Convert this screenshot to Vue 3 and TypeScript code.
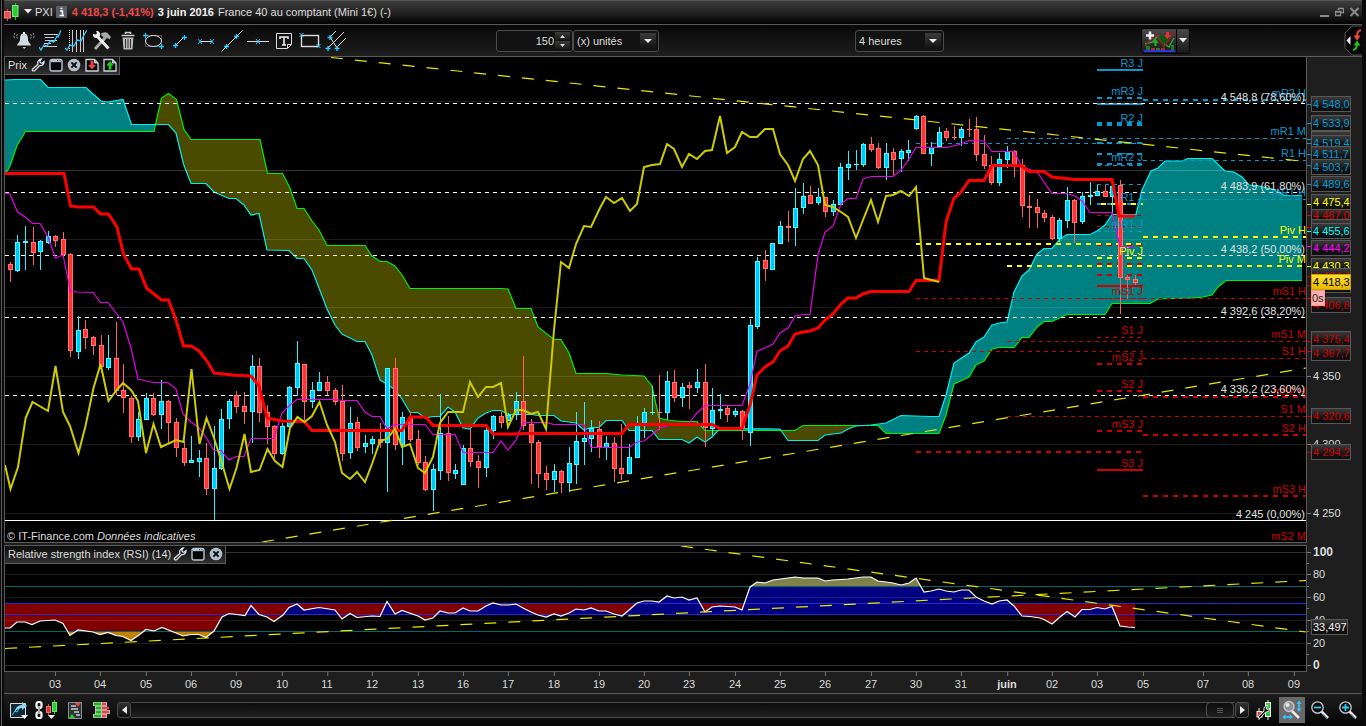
<script setup lang="ts">
import { ref } from 'vue'

type Pt = [number, number]
interface Level { x1: number; x2: number; y: number; c: string; w: number; d: string }
interface Tag { p: string; y: number; c: string; tick?: number }

const units = ref(150)
const unitKind = ref('(x) unités')
const period = ref('4 heures')

/* Plot space of the two panels */
const L = 5, W = 1301
const P_TOP = 57, P_H = 485
const R_TOP = 546, R_H = 125
const pTop = (y: number) => ({ top: ((y - P_TOP) / P_H) * 100 + '%' })
const rTop = (y: number) => ({ top: ((y - R_TOP) / R_H) * 100 + '%' })
const xPos = (x: number) => ({ left: ((x - L) / W) * 100 + '%' })
const endAt = (x: number) => ({ right: ((L + W - x) / W) * 100 + '%' })

/* direction, high, body top, body bottom, low */
const raw = `d262,264,270,282 u235,242,271,272 u226,241,243,270 d227,242,253,265 u240,241,252,270 u231,236,243,244 d235,236,241,247 d232,239,255,258 d253,254,351,357 u316,330,352,359
d320,329,338,349 d336,337,346,355 d335,345,367,373 u335,358,368,370 d322,358,391,395 d364,390,398,413 d396,398,437,443 u412,419,437,441 u393,398,420,420 d393,398,415,416
u380,401,415,429 d400,401,423,444 d418,422,448,457 d441,448,463,466 u436,460,463,463 u450,458,462,477 d443,458,489,495 u426,468,489,520 u409,419,469,470 u399,401,419,429
d391,395,407,413 d392,406,412,424 u355,366,412,443 d358,366,413,422 d405,412,427,444 d425,426,454,458 u423,426,454,455 u386,387,427,427 u341,363,388,396 d364,364,402,420
u382,390,402,408 u372,382,391,391 d376,382,391,395 d388,390,402,405 d385,401,454,461 u407,423,453,459 d417,422,448,451 u435,443,447,453 u436,439,444,454 d423,439,443,448
u368,368,443,492 d358,368,445,450 u412,417,445,465 d412,417,440,442 d430,439,463,465 d456,462,490,491 u464,469,490,511 u394,433,471,480 d416,433,473,481 u464,470,474,479
u445,448,485,485 d429,448,462,467 d455,461,468,488 u427,430,468,477 u415,416,431,439 d412,416,423,428 u413,415,421,421 u392,401,415,420 d356,401,426,430 d419,424,443,484
d440,442,474,488 d466,473,480,490 u464,471,480,492 d470,471,483,493 u447,463,483,492 u412,441,465,484 u402,438,442,465 u420,428,439,452 d421,429,447,458 u436,443,448,460
d437,443,469,482 d424,468,474,480 u444,457,474,474 u416,424,458,458 u408,412,424,438 u386,412,413,415 d375,412,413,430 u371,381,413,420 d370,382,398,402 u383,387,398,407
d382,385,388,409 u369,382,388,393 d364,382,428,447 u388,410,429,435 u394,409,411,419 d406,408,415,422 u408,411,415,417 d410,411,428,440 u319,325,433,446 u257,261,327,329
d250,260,269,281 u243,243,270,270 u221,226,244,244 d211,226,228,242 u188,208,228,246 u183,196,208,214 d186,195,204,204 u188,197,203,205 d197,197,212,217 u200,204,212,216
u163,167,205,205 u151,164,168,180 u150,164,165,170 u143,144,165,167 d137,144,150,152 d143,148,168,169 u143,153,168,180 d148,152,160,175 u149,151,159,172 u140,150,153,161
u115,116,129,130 d115,116,154,154 u142,147,154,166 u127,132,147,147 d128,131,138,141 d126,137,138,140 u127,129,138,146 d119,129,130,137 d117,129,155,161 d135,154,166,169
d156,165,183,185 u153,159,183,186 u146,151,160,168 d150,151,166,177 d159,165,206,217 d195,206,208,228 d199,207,213,228 d210,213,218,222 d215,217,239,240 u218,220,239,242
u187,200,221,228 d199,200,223,243 u192,196,222,224 u182,195,197,205 u185,191,196,196 d185,191,197,197 u186,186,197,215 d180,185,278,314 d275,277,280,299 d275,279,283,285`
const candles = raw.split(/\s+/).map((s, i) => {
  const [h, t, b, l] = s.slice(1).split(',').map(Number)
  return { x: Math.floor(10.4 + i * 7.55), up: s[0] === 'u', h, t, b, l }
})

const chikou = '5,465 10.5,489 18,467 25.6,418 32.5,402 48,411 55.5,366 63,412 70,426 78.5,453 85.5,426 93.5,388 100.6,364 108.5,401 116,391 123,383 131,390 138,401 146,453 153.5,424 161,447 176,440 183.5,442 191.5,369 199.5,444 206.5,418 214,438 221,460 229.5,489 236.5,468 244.5,434 251,472 259.5,470 267.5,449 275,461 282.5,467 290,428 297.5,417 304.5,422 312,416 319.5,402 327,425 335,442 342,473 350,479 357,472 365,482 372,464 380,441 387,439 395,429 402,447 410,444 418,468 425,473 433,457 440,423 448,412 463,412 470,382 478,397 486,387 493,387 501,383 508,427 516,410 523,410 531,414 538,412 546,429 554,330 561,262 569,268 576,244 584,226 591,227 600,208 606,197 614,203 622,198 630,211 637,204 644,167 652,165 660,164 667,144 674,149 682,167 689,154 697,159 705,151 712,150 720,116 727,153 735,147 742,132 750,137 757,137 765,129 773,129 780,154 788,165 795,181 803,159 810,151 818,165 825,205 833,207 841,212 848,217 856,238 863,220 871,200 878,222 886,196 893,195 901,191 909,196 916,187 924,278 939,282'
const kijun = '5,173.5 64,173.5 70.5,206 78,207 93.5,207 100.5,214 108.5,214 117,227 123.5,254 131.5,269 139,269 146.5,288 161.5,300 168.5,300 176,320 183.5,346 191,346 199,351 207,361 214,373 233,375 251,376 259,386 267,418 282,421 304,421.5 312,430.5 402,430.5 410,417 426,417 433,425.5 486,425.5 493,434 513,434 523,433.5 622,433.5 629,424.5 712,424.5 720,428.5 742,428.5 750,405 757,375 765,367 773,362 780,351 788,346 795,334 803,332 810,331 818,328 825,320 833,314 841,304 848,298 856,298 863,294 871,291.5 909,291.5 916,280.5 939,280.5 946,222 954,198 961,192 969,180.5 984,180.5 992,165.5 1014,165.5 1022,166 1029,171.5 1044,171.5 1052,177 1075,179.5 1112,179.5 1119,216 1135,216'
const tenkan = '5,193 10,194 17.5,212 25,217 32.5,223.5 40,223.5 48,237 55.5,258 63,255 70.5,291.5 78,292 93,292.5 100.5,302.5 108,302.5 123,322 131,348 138,379 153,382.5 168,382.5 176,389 183,414 191,422 199,428 207,439 214,450.5 221,450.5 229,460 236,456.5 244,456.5 251,438.5 274,438.5 282,413 289,406 297,399.5 335,399.5 342,400.5 357,400.5 365,412 372,416.5 380,416.5 387,429 395,424.5 425,424.5 433,434.5 455,434.5 463,452.5 493,452.5 501,441 508,450 516,440 523,422.5 546,422.5 554,424.5 584,424.5 591,447.5 629,447.5 637,442 644,441 660,428 667,426 689,423 697,413 705,405.5 742,405.5 750,384 757,351 765,348 773,344 780,333 788,328 795,316 803,314.5 810,314.5 818,255 825,232 833,226 841,204 848,198.5 856,198.5 863,179 871,176.5 893,176.5 901,170 909,159 916,147.5 947,147.5 961,144 969,140.5 984,141 992,151.5 1014,151.5 1022,167 1037,172 1052,193.5 1067,193.5 1075,196 1082,201 1090,212.5 1112,212.5 1120,246.5 1135,246.5'
const spanA = '5,80 16,79.5 40.5,79.5 48,87.5 86,87.5 93,94 101,101 108,102 116,100.5 123,99.5 131.5,124.5 168.5,124.5 176,133 183.5,164 191,183.5 206,183.5 214,192 229,198.5 236,198.5 244,205 251,215 259,213.5 267,250 289,250.5 297,258.5 304,258.5 312,270 319,288 327,309 335,325 342,334 357,341.5 365,341.5 372,355 380,380 387,384 395,390 402,399 410,412.5 418,412.5 425,418 433,416.5 440,416.5 448,407 455,412 463,428 470,429 478,418 486,413 493,410.5 501,410.5 508,414.5 531,414.5 538,415.5 554,415.5 561,421 576,423 584,430 591,427.5 599,427.5 606,420.5 622,420.5 629,430.5 652,430.5 659,439.5 682,439.5 689,443 697,437 705,442 712,437 720,428.5 780,429 788,440.5 818,440.5 825,435 841,433 848,429 856,426 871,425 886,423 901,415.5 930,416.5 939,416.5 946,395 954,363 969,353 976,342 984,337 992,325 999,323 1007,322 1014,292 1022,276 1029,270 1037,254 1044,248.5 1052,248.5 1060,239 1067,234.5 1090,234.5 1097,231 1105,225 1112,214.5 1136,214.5 1142,190 1151,171 1158,168 1165,161 1182,161 1188,158.5 1212,158.5 1225,171 1234,172 1242,177 1249,185 1257,185.5 1272,189 1285,195.5 1302,195.5'
const spanB = '5,175 10,166 17,145.5 25.5,131.5 154,131.5 161.5,98 168.5,93.5 176.5,99.5 184,129.5 191,139.5 260,139.5 267.5,173.5 282.5,173.5 289.5,187 297,208.5 304,208.5 312,221 319,230 327,245.5 365,245.5 372,256 380,261.5 387,261.5 395,266 402,275 410,288.5 501,288.5 508,289 516,308.5 531,308.5 538,327 554,339.5 561,339.5 569,353 576,373.5 606,373.5 622,375 644,376 652,386 659,418 667,420 682,421.5 697,421.5 705,430.5 795,430.5 803,425.5 878,425.5 886,433.5 939,433.5 946,415 954,384 969,377 976,365 984,361 992,349 999,347.5 1014,347.5 1022,337.5 1029,337.5 1037,327 1044,321.5 1052,321.5 1067,314.5 1105,314.5 1112,303.5 1150,303.5 1158,299 1193,298 1203,297 1212,295 1218,287 1226,280.5 1302,280.5'

const parse = (s: string): Pt[] => s.split(' ').map(p => p.split(',').map(Number) as Pt)
const at = (pts: Pt[], x: number): number => {
  for (let i = 1; i < pts.length; i++) {
    if (x <= pts[i][0]) {
      const [x0, y0] = pts[i - 1], [x1, y1] = pts[i]
      return y0 + ((y1 - y0) * (x - x0)) / (x1 - x0)
    }
  }
  return pts[pts.length - 1][1]
}

/* The cloud changes colour wherever its two edges cross */
const clouds = (() => {
  const a = parse(spanA), b = parse(spanB)
  const xs = [...new Set([...a, ...b].map(p => p[0]))].sort((m, n) => m - n)
  const out: { d: string; bull: boolean }[] = []
  let top: Pt[] = [], bot: Pt[] = []
  let bull = at(a, xs[0]) < at(b, xs[0])
  const flush = () => {
    out.push({ bull, d: 'M' + [...top, ...bot.slice().reverse()].map(p => p.join(',')).join('L') + 'Z' })
  }
  let prev: [number, number, number] | null = null
  for (const x of xs) {
    const ya = at(a, x), yb = at(b, x)
    if (prev && ya !== yb && (ya < yb) !== bull) {
      const d0 = prev[1] - prev[2], d1 = ya - yb
      const t = d0 === d1 ? 0 : d0 / (d0 - d1)
      const c: Pt = [prev[0] + (x - prev[0]) * t, prev[1] + (ya - prev[1]) * t]
      top.push(c); bot.push(c)
      flush()
      top = [c]; bot = [c]
      bull = !bull
    }
    top.push([x, ya]); bot.push([x, yb])
    prev = [x, ya, yb]
  }
  flush()
  return out
})()

const B = '#0898d0', R = '#cc0000', Y = '#ffff00'
const lv = (x1: number, x2: number, c: string, list: [number, number, string?][]): Level[] =>
  list.map(([y, w, solid]) => ({ x1, x2, c, y, w, d: solid ? 'none' : w === 1 ? '4 4' : '5 5' }))
const levels: Level[] = [
  ...lv(1097, 1143, B, [[70, 2, 's'], [98, 2], [104, 2, 's'], [124, 4], [143, 2], [154, 2], [164, 2], [165.5, 1], [184.5, 1], [204, 2], [231.5, 1]]),
  ...lv(1101, 1143, Y, [[204, 2]]),
  ...lv(1097, 1143, R, [[215.5, 1], [226.5, 1], [245, 2], [264, 2], [275, 2], [286, 2, 's'], [298.5, 1], [337.5, 1], [364, 2], [391, 2], [431, 2], [470, 2, 's']]),
  ...lv(1097, 1143, Y, [[258, 2]]),
  ...lv(1143, 1306, B, [[100, 2], [160.5, 1], [199.5, 1]]),
  ...lv(1143, 1306, Y, [[237, 2]]),
  ...lv(1143, 1306, R, [[298.5, 1], [358.5, 1], [397, 2], [435, 2], [496, 2]]),
  ...lv(916, 1143, B, [[143.5, 1]]),
  ...lv(916, 1143, Y, [[244, 2]]),
  ...lv(916, 1143, R, [[298.5, 1], [351.5, 1], [452, 2]]),
  ...lv(1007, 1306, B, [[138.5, 1]]),
  ...lv(1007, 1306, Y, [[266, 2]]),
  ...lv(1007, 1306, R, [[341.5, 1], [416.5, 1]]),
]

const lab = (x: number, c: string, list: [string, number][]) => list.map(([t, y]) => ({ x, c, t, y }))
const levelLabels = [
  ...lab(1143, B, [['R3 J', 63], ['mR3 J', 91], ['R2 J', 118], ['mR2 J', 157], ['R1 J', 197], ['mR1 J', 224]]),
  ...lab(1143, Y, [['Piv J', 251]]),
  ...lab(1143, R, [['mS1 J', 291], ['S1 J', 330], ['mS2 J', 357], ['S2 J', 384], ['mS3 J', 424], ['S3 J', 463]]),
  ...lab(1306, B, [['mR2 H', 93], ['mR1 M', 131], ['R1 H', 153], ['mR1 H', 192]]),
  ...lab(1306, Y, [['Piv H', 230], ['Piv M', 259]]),
  ...lab(1306, R, [['mS1 H', 291], ['mS1 M', 334], ['S1 H', 351], ['mS2 H', 391], ['S1 M', 409], ['S2 H', 428], ['mS3 H', 489], ['mS2 M', 536]]),
]
const fibs = [
  { y: 103.5, ty: 97, t: '4 548,8 (78,60%)' }, { y: 192.5, ty: 186, t: '4 483,9 (61,80%)' },
  { y: 255.5, ty: 249, t: '4 438,2 (50,00%)' }, { y: 317.5, ty: 311, t: '4 392,6 (38,20%)' },
  { y: 395.5, ty: 389, t: '4 336,2 (23,60%)' }, { y: 520.5, ty: 514, t: '4 245 (0,00%)' },
]
const grid = [101.5, 170.5, 239.5, 307.5, 376.5, 444.5, 513.5]

/* Later tags cover earlier ones */
const tags: Tag[] = [
  { p: '4 548,0', y: 104, c: B }, { p: '4 522,8', y: 139, c: B }, { p: '4 533,9', y: 123, c: B }, { p: '4 519,4', y: 143, c: B },
  { p: '4 511,7', y: 154, c: B }, { p: '4 503,7', y: 167, c: B, tick: 165 }, { p: '4 489,6', y: 184, c: B },
  { p: '4 467,0', y: 215, c: '#e00000' }, { p: '4 475,4', y: 202, c: Y, tick: 204 }, { p: '4 459,4', y: 227, c: '#e00000' }, { p: '4 455,6', y: 231, c: '#00ffff' },
  { p: '4 444,2', y: 248, c: '#ff00ff', tick: 246 }, { p: '4 430,3', y: 266, c: Y }, { p: '4 424,4', y: 276, c: '#cc0000' },
  { p: '4 416,6', y: 285, c: '#cc0000' }, { p: '4 406,8', y: 305, c: '#cc0000', tick: 298 },
  { p: '4 375,4', y: 339, c: '#cc0000', tick: 341 }, { p: '4 367,7', y: 353, c: '#cc0000', tick: 351 },
  { p: '4 320,6', y: 416, c: '#cc0000' }, { p: '4 294,2', y: 452, c: '#cc0000' },
]
const scale = [{ t: '4 350', y: 376 }, { t: '4 300', y: 444 }, { t: '4 250', y: 513 }]

const rsi = '5,628 10,628 17,622 25,622 32,624.5 40,621 55,620 63,623.5 70,635.5 78,630 93,632 100,634.5 108,632.5 116,635.5 123,636.5 131,640.5 139,635 146,629.5 154,631 162,627.5 176,633 183,636 191,634.5 199,634.5 206,637.5 214,631 222,617 229,613.5 245,615.5 251,605.5 259,614.5 267,617 274,621.5 283,615 289,607.5 297,604 304,610 319,607.5 335,610 342,619 350,613.5 357,617.5 372,616 380,616.5 387,601.5 395,614 402,610.5 418,616 425,620 433,618 440,611 448,613 455,613 463,608 470,611 478,611 486,606 493,603 501,605 509,605 516,604 523,608 531,612 538,615 546,617 554,614 561,616 569,613 576,609 584,610 591,608 599,611 606,611 614,614 622,616 629,610 637,603 644,601 652,601 659,602 667,596 674,598 682,597 689,600 697,598 705,612 712,607 720,606 735,607 742,610 750,587 757,582 765,583 773,580 788,578 795,577 803,578 818,578 825,581 833,580 848,579 863,577 871,577 878,581 886,582 893,583 901,585 909,583 916,578 924,592 931,591 939,589 946,591 954,592 961,590 969,590 976,597 984,601 992,604 999,601 1007,600 1014,606 1022,616 1030,616.5 1040,618 1045,620 1052,624 1060,617 1067,611.5 1075,617 1082,609.5 1090,609.5 1097,607.5 1105,609 1112,606.5 1120,626 1128,627 1135,627.5'
const rsiArea = (y: number) => `M5,${y}L${rsi.split(' ').join('L')}L1135,${y}Z`
const rsiScale = [
  { t: '100', y: 552, b: true }, { t: '80', y: 574, b: false }, { t: '60', y: 597, b: false },
  { t: '40', y: 620, b: false }, { t: '20', y: 643, b: false }, { t: '0', y: 665, b: true },
]
const rsiMinor = [563, 586, 608, 631, 654]

const days = [
  ['03', 55], ['04', 100], ['05', 146], ['06', 191], ['09', 236], ['10', 282], ['11', 327], ['12', 372], ['13', 418], ['16', 463],
  ['17', 508], ['18', 554], ['19', 599], ['20', 644], ['23', 689], ['24', 735], ['25', 780], ['26', 825], ['27', 871], ['30', 916],
  ['31', 961], ['juin', 1007], ['02', 1052], ['03', 1097], ['05', 1143], ['07', 1203], ['08', 1248], ['09', 1294],
].map(([t, x]) => ({ t: t as string, x: x as number }))
</script>

<template>
  <div class="win">
    <svg class="defs" aria-hidden="true">
      <symbol id="wrench" viewBox="0 0 14 14"><path d="M1.5 11.2L7 6.2C6.2 3.6 7.6 1.3 10.3 1L8.8 3.2L9.4 4.8L11 5.2L13 3.6C13.2 6.4 11 8 8.6 7.6L3.6 12.8C2.4 13.6.8 12.6 1.5 11.2Z" fill="#111" stroke="#dde4ee" stroke-width="1.3" /></symbol>
      <symbol id="window" viewBox="0 0 14 14"><rect x="1" y="1.5" width="12" height="11.5" rx="2" fill="#000" stroke="#b9c5d4" stroke-width="1.4" /><path d="M2 3h10" stroke="#b9c5d4" stroke-width="2.4" /><path d="M8 2.7h1M10.5 2.7h1" stroke="#333" /></symbol>
      <symbol id="cross" viewBox="0 0 14 14"><circle cx="7" cy="7" r="6.3" fill="#b4becb" /><path d="M4.4 4.4l5.2 5.2M9.6 4.4l-5.2 5.2" stroke="#0a0a0a" stroke-width="2" /></symbol>
      <symbol id="sheet" viewBox="0 0 14 14"><path d="M1 1.5h8.5l3.5 3.5v8H1z" fill="#000" stroke="#d0d5db" stroke-width="1.3" /><path d="M9.5 1.5V5H13" fill="#aaa" stroke="#d0d5db" /></symbol>
      <symbol id="lens" viewBox="0 0 20 20"><path d="M11.5 11.5l6.5 6.5" stroke="#dfe5ec" stroke-width="2.6" /><path d="M13 14l4.5 4.5" stroke="#8a919b" /><circle cx="7.5" cy="7.5" r="5.7" fill="#0b0b0b" stroke="#c9ced6" stroke-width="1.3" /></symbol>
    </svg>

    <header class="title">
      <svg class="logo" width="15" height="18" viewBox="0 0 15 18"><path d="M3.5 6v12" stroke="#e04848" /><rect x=".5" y="8.5" width="6" height="6.5" fill="#e85050" stroke="#f08080" /><path d="M11.5 0v17" stroke="#20c020" /><rect x="8.5" y="2.5" width="5.5" height="11" fill="#30c838" stroke="#70f070" /></svg>
      <button class="bare caret" aria-label="Choisir la valeur"><svg width="8" height="5" viewBox="0 0 8 5"><path d="M0 0h8L4 4.500z" fill="#eee" /></svg></button>
      <span class="sym">PXI</span>
      <button class="bare info" aria-label="Informations"><svg width="11" height="12" viewBox="0 0 11 12"><rect width="11" height="12" rx="1" fill="#5b5f68" /><path d="M4 5h2.500v4M3.500 9.500h4.500M4.500 2.500h2" stroke="#fff" stroke-width="1.5" fill="none" /></svg></button>
      <b class="quote">4 418,3 (-1,41%)</b>
      <b class="date">3 juin 2016</b>
      <span>France 40 au comptant (Mini 1€) (-)</span>
      <div class="wbtns">
        <button class="bare" aria-label="Réduire"><svg width="9" height="10" viewBox="0 0 9 10"><path d="M0 9h9" stroke="#8a8a8a" stroke-width="2" /></svg></button>
        <button class="bare" aria-label="Restaurer"><svg width="9" height="10" viewBox="0 0 9 10"><path d="M3.500 3V1.500h5v4H6M.5 4.500h5v4h-5zM3 1.500h6M0 5h6" fill="none" stroke="#8a8a8a" stroke-width="1.3" /></svg></button>
        <button class="bare" aria-label="Fermer"><svg width="9" height="10" viewBox="0 0 9 10"><path d="M.5 1l8 8M8.500 1l-8 8" stroke="#8a8a8a" stroke-width="2" /></svg></button>
      </div>
    </header>

    <div class="toolbar">
      <div class="tools">
        <button class="tool" aria-label="Alarme"><svg width="22" height="22" viewBox="0 0 22 22"><path d="M11 3.500c3.500 0 4 3 4 6 0 3 2.500 3.500 3 6H4c.5-2.500 3-3 3-6 0-3 .5-6 4-6z" fill="#d3dae2" /><path d="M9.500 17h3.500l-1.800 2z" fill="#c8ccd2" /><path d="M11 2v2" stroke="#fff" stroke-width="2" /><path d="M4.500 4q-1.500 2 0 4.500M2 3q-2 3 0 6M17.500 4q1.500 2 0 4.500M20 3q2 3 0 6" fill="none" stroke="#aaa" stroke-dasharray="2 1" /></svg></button>
        <button class="tool" aria-label="Trade au carnet"><svg width="22" height="22" viewBox="0 0 22 22"><path d="M5 4.500h14M6 7.500h9M6 10.500h12M5 13.500h7M5 16.500h13" stroke="#ccc" /><path d="M0 17l2 3 3-5 3 1 3-5 4 1 3-6 1 1L22 0" fill="none" stroke="#30c8ff" stroke-width="1.3" /></svg></button>
        <button class="tool" aria-label="Cycles"><svg width="22" height="22" viewBox="0 0 22 22"><path d="M4.500 0v22" stroke="#ddd" stroke-dasharray="1 1" /><path d="M7.500 0v22M11.500 0v22M15.500 0v22M18.500 0v22" stroke="#ccc" /><path d="M0 18l2 2 3-5 4 1 3-6 4 1 3-6L22 0" fill="none" stroke="#30c8ff" stroke-width="1.3" /></svg></button>
        <button class="tool" aria-label="Outils"><svg width="22" height="22" viewBox="0 0 22 22"><path d="M4 19L14 8" stroke="#aaa" stroke-width="3" /><path d="M10 3.500q4-2 6.500-.5L20 7l-1.500 2.500-2-1.500-2 1-4-3.500z" fill="#a8a8a8" /><path d="M6 6l11.500 12.500" stroke="#eee" stroke-width="3" /><path d="M2 4l3 .5L6 3 5 1c3-.5 5 2 4 5L6 8C3 8.500 1.500 6 2 4z" fill="#eee" /></svg></button>
        <button class="tool" aria-label="Supprimer"><svg width="18" height="20" viewBox="0 0 18 20"><path d="M3.500 6.500h11l-1 12h-9z" fill="#b8b8b8" /><path d="M2.500 4.500h13M6.500 3V1.500h5V3" fill="none" stroke="#ccc" stroke-width="1.600" /><path d="M6.500 8v9M9 8v9M11.500 8v9" stroke="#333" /></svg></button>
        <button class="tool" aria-label="Ellipse"><svg width="22" height="18" viewBox="0 0 22 18"><rect x="2.500" y="3.500" width="16" height="11" fill="none" stroke="#555" /><ellipse cx="10.500" cy="9" rx="8" ry="5.500" fill="none" stroke="#ddd" /><path d="M0 3.500h5M2.500 1v5M16 14.500h5M18.500 12v5" stroke="#30c8ff" stroke-width="1.300" /></svg></button>
        <button class="tool" aria-label="Segment"><svg width="16" height="16" viewBox="0 0 16 16"><path d="M4 12l8-8" stroke="#ddd" /><path d="M1 12.500h5M3.500 10v5M10 4.500h5M12.500 2v5" stroke="#30c8ff" stroke-width="1.300" /></svg></button>
        <button class="tool" aria-label="Segment horizontal"><svg width="18" height="10" viewBox="0 0 18 10"><path d="M3 5.500h12" stroke="#ddd" /><path d="M1 3l4 5M5 3L1 8M13 3l4 5M17 3l-4 5" stroke="#30c8ff" /></svg></button>
        <button class="tool" aria-label="Droite"><svg width="22" height="22" viewBox="0 0 22 22"><path d="M.5 21.500l21-21" stroke="#ddd" /><path d="M3 16.500h5M5.500 14v5M13 6.500h5M15.500 4v5" stroke="#30c8ff" stroke-width="1.300" /></svg></button>
        <button class="tool" aria-label="Ligne horizontale"><svg width="22" height="10" viewBox="0 0 22 10"><path d="M0 5.500h22" stroke="#ddd" /><path d="M9 3l4 5M13 3l-4 5" stroke="#30c8ff" /></svg></button>
        <button class="tool" aria-label="Texte"><svg width="16" height="16" viewBox="0 0 16 16"><path d="M.5.5h15v11l-4 4h-11zM11.500 15v-3.500H15" fill="none" stroke="#ddd" /><path d="M4 6V4h8v2M8 4v8M6 12h4" fill="none" stroke="#eee" stroke-width="1.600" /></svg></button>
        <button class="tool" aria-label="Rectangle"><svg width="22" height="18" viewBox="0 0 22 18"><rect x="2.500" y="3.500" width="17" height="11" fill="none" stroke="#ddd" stroke-width="1.400" /><path d="M.5 1l4 4M4.500 1l-4 4M17.500 12l4 4M21.500 12l-4 4" stroke="#30c8ff" /></svg></button>
        <button class="tool" aria-label="Fourchette"><svg width="22" height="22" viewBox="0 0 22 22"><path d="M5 7l6-6M5 7l7 11M3 18L16 5M8.500 12.500L19 2M12 17l9-9" fill="none" stroke="#ddd" /><path d="M2.500 7.500h5M5 5v5M.5 18.500h5M3 16v5M9.500 18.500h5M12 16v5" stroke="#30c8ff" stroke-width="1.300" /></svg></button>
      </div>
      <div class="units">
        <input v-model="units" type="text" inputmode="numeric" aria-label="Nombre d'unités" />
        <div class="spin">
          <button aria-label="Plus" @click="units = Number(units) + 1"><svg width="5" height="3" viewBox="0 0 5 3"><path d="M0 3h5L2.500 0z" fill="#ddd" /></svg></button>
          <button aria-label="Moins" @click="units = Number(units) - 1"><svg width="5" height="3" viewBox="0 0 5 3"><path d="M0 0h5L2.500 3z" fill="#ddd" /></svg></button>
        </div>
      </div>
      <label class="pick kind"><select v-model="unitKind" aria-label="Type d'unités"><option>(x) unités</option></select><span class="arrow"></span></label>
      <label class="pick per"><select v-model="period" aria-label="Période"><option>4 heures</option></select><span class="arrow"></span></label>
      <div class="indic">
        <button aria-label="Ajouter un indicateur"><svg width="31" height="22" viewBox="0 0 31 22"><path d="M1 14l7-2 6-6 5 7 6 4 5-9" fill="none" stroke="#30a030" stroke-width="1.500" /><path d="M14 6l5 9 6-6-6-3z" fill="#0c5a0c" /><path d="M1 16L12 4l8 13L30 2" fill="none" stroke="#a02020" stroke-width="1.200" /><path d="M22 2h3v3h2l-3.500 4L20 5h2z" fill="#e83030" /><path d="M10.500 16v-3h-2l3-4 3 4h-2v3z" fill="#20b020" /><path d="M2 5.500h8M6 1.500v8" stroke="#e8eefa" stroke-width="2.500" /><path d="M2 16h4v4H2zM12 18h4v2h-4zM27 15h3v5h-3z" fill="#1b7a1b" /><path d="M7 18h4v2H7zM17 18h4v2h-4z" fill="#c02020" /><path d="M0 21h31" stroke="#2838e0" stroke-width="2" /></svg></button>
        <button class="more" aria-label="Plus d'indicateurs"><svg width="8" height="5" viewBox="0 0 8 5"><path d="M0 0h8L4 4.500z" fill="#eee" /></svg></button>
      </div>
      <button class="bare side" aria-label="Panneau d'ordres"><svg width="18" height="31" viewBox="0 0 18 31"><path d="M18 1H8L1 8v15l7 7h10" fill="#050505" stroke="#555" /><path d="M6.500 11v9L2.500 15.500z" fill="#eee" /><path d="M17 5q-4 1-4 6" fill="none" stroke="#f04040" stroke-width="2" /><path d="M9.500 10.500h7L13 16z" fill="#f04040" /><path d="M9 25q4-1 4-6" fill="none" stroke="#20c020" stroke-width="2" /><path d="M9.500 20.500h7L13 15.500z" fill="#20c020" /></svg></button>
    </div>

    <main class="charts">
      <section class="row price" aria-label="Prix">
        <div class="plot">
          <svg class="canvas" viewBox="5 57 1301 485" preserveAspectRatio="none">
            <path v-for="(c, i) in clouds" :key="'c' + i" :d="c.d" :fill="c.bull ? '#008080' : '#4a4a00'" />
            <g shape-rendering="crispEdges">
              <line v-for="y in grid" :key="y" x1="5" x2="1306" :y1="y" :y2="y" stroke="#fff" :stroke-opacity="y === 170.5 ? 0.2 : 0.11" />
            </g>
            <polyline :points="spanB" class="ln" stroke="#00f000" stroke-width="1.200" />
            <polyline :points="spanA" class="ln" stroke="#00f0f0" stroke-width="1.200" />
            <g shape-rendering="crispEdges">
              <line v-for="(l, i) in levels" :key="'l' + i" :x1="l.x1" :x2="l.x2" :y1="l.y" :y2="l.y" :stroke="l.c" :stroke-width="l.w" :stroke-dasharray="l.d" />
              <line v-for="f in fibs" :key="f.y" x1="5" x2="1306" :y1="f.y" :y2="f.y" stroke="#fff" :stroke-dasharray="f.y > 500 ? 'none' : '4 4'" />
              <g v-for="(c, i) in candles" :key="i">
                <rect :x="c.x" :y="c.h" width="1" :height="c.l - c.h" :fill="c.up ? '#30f0ff' : '#ff6060'" />
                <rect :x="c.x - 2" :y="c.t" width="5" :height="Math.max(1, c.b - c.t)" :fill="c.up ? '#40ffff' : '#ff7070'" />
                <rect v-if="c.b - c.t > 2" :x="c.x - 1" :y="c.t + 1" width="3" :height="c.b - c.t - 2" :fill="c.up ? '#00c8ff' : '#ff3333'" />
              </g>
            </g>
            <polyline :points="tenkan" class="ln" stroke="#e800e8" stroke-width="1.200" />
            <polyline :points="kijun" class="ln" stroke="#ff0000" stroke-width="3" />
            <polyline :points="chikou" class="ln" stroke="#cccc00" stroke-width="2" />
            <path d="M331,57.500L1300,161M262,542L1306,368" class="ln" stroke="#e8e800" stroke-width="1.200" stroke-dasharray="12 12" />
          </svg>
          <span v-for="(l, i) in levelLabels" :key="i" class="lbl" :style="{ ...pTop(l.y), ...endAt(l.x), color: l.c }">{{ l.t }}</span>
          <span v-for="f in fibs" :key="f.t" class="lbl fib" :style="{ ...pTop(f.ty), ...endAt(1305) }">{{ f.t }}</span>
          <div class="head">
            <span>Prix</span>
            <button class="bare" aria-label="Réglages du prix"><svg width="14" height="14"><use href="#wrench" /></svg></button>
            <button class="bare" aria-label="Agrandir"><svg width="14" height="14"><use href="#window" /></svg></button>
            <button class="bare" aria-label="Fermer le prix"><svg width="14" height="14"><use href="#cross" /></svg></button>
            <button class="bare" aria-label="Descendre"><svg width="14" height="14" viewBox="0 0 14 14"><use href="#sheet" /><path d="M5.500 3h3v4H11l-4 4.500L3 7h2.500z" fill="#f04040" /></svg></button>
            <button class="bare" aria-label="Monter"><svg width="14" height="14" viewBox="0 0 14 14"><use href="#sheet" /><path d="M5.500 11.500h3v-4H11L7 3 3 7.500h2.500z" fill="#20c820" /></svg></button>
          </div>
          <p class="credit">© IT-Finance.com <i>Données indicatives</i></p>
        </div>
        <div class="axis">
          <i v-for="s in scale" :key="s.y" class="tick" :style="pTop(s.y)"></i>
          <span v-for="s in scale" :key="s.t" class="num" :style="pTop(s.y)">{{ s.t }}</span>
          <template v-for="t in tags" :key="t.p">
            <i class="tick" :style="{ ...pTop(t.tick ?? t.y), background: t.c }"></i>
            <span class="tag" :style="{ ...pTop(t.y), color: t.c }">{{ t.p }}</span>
          </template>
          <span class="tag last" :style="pTop(282)">4 418,3</span>
          <span class="tag timer" :style="pTop(298)">0s</span>
        </div>
      </section>

      <section class="row rsi" aria-label="RSI">
        <div class="plot">
          <svg class="canvas" viewBox="5 546 1301 125" preserveAspectRatio="none">
            <clipPath id="hot"><rect x="5" y="546" width="1301" height="40" /></clipPath>
            <clipPath id="bull"><rect x="5" y="586" width="1301" height="29" /></clipPath>
            <clipPath id="bear"><rect x="5" y="603" width="1301" height="28" /></clipPath>
            <clipPath id="cold"><rect x="5" y="631" width="1301" height="40" /></clipPath>
            <path :d="rsiArea(603)" fill="#800000" clip-path="url(#bear)" />
            <path :d="rsiArea(603)" fill="#c08000" clip-path="url(#cold)" />
            <path :d="rsiArea(615)" fill="#000080" clip-path="url(#bull)" />
            <path :d="rsiArea(615)" fill="#80804a" clip-path="url(#hot)" />
            <g shape-rendering="crispEdges">
              <line v-for="s in rsiScale" :key="s.y" x1="5" x2="1306" :y1="s.y + 0.5" :y2="s.y + 0.5" stroke="#fff" :stroke-opacity="s.b ? 0.2 : 0.1" />
              <path d="M5,586.500H1306M5,631.500H1306" stroke="#006868" />
              <path d="M5,603.500H1306M5,614.500H1306" stroke="#2828d0" />
            </g>
            <polyline :points="rsi" class="ln" stroke="#fff" stroke-width="1.200" />
            <path d="M5,648.500L1306,580.500M681,546L1306,632" class="ln" stroke="#e8e800" stroke-width="1.200" stroke-dasharray="12 12" />
          </svg>
          <div class="head tight">
            <span>Relative strength index (RSI) (14)</span>
            <button class="bare" aria-label="Réglages du RSI"><svg width="14" height="14"><use href="#wrench" /></svg></button>
            <button class="bare" aria-label="Agrandir le RSI"><svg width="14" height="14"><use href="#window" /></svg></button>
            <button class="bare" aria-label="Fermer le RSI"><svg width="14" height="14"><use href="#cross" /></svg></button>
          </div>
        </div>
        <div class="axis">
          <i v-for="y in rsiMinor" :key="y" class="tick short" :style="rTop(y)"></i>
          <i v-for="s in rsiScale" :key="s.y" class="tick" :style="rTop(s.y)"></i>
          <span v-for="s in rsiScale" :key="s.t" class="num" :class="{ big: s.b }" :style="rTop(s.y)">{{ s.t }}</span>
          <span class="tag now" :style="rTop(627)">33,497</span>
        </div>
      </section>

      <div class="time">
        <div class="days">
          <span v-for="d in days" :key="d.x" :class="{ month: d.t === 'juin' }" :style="xPos(d.x)">{{ d.t }}</span>
        </div>
      </div>
    </main>

    <footer class="bottom">
      <button class="bare b1" aria-label="Partager"><svg width="18" height="18" viewBox="0 0 18 18"><path d="M.5 2.500h15v14H.5z" fill="#102838" stroke="#ddd" /><path d="M2 14l3-4 2 1 3-5" fill="none" stroke="#30c8ff" /><path d="M5 11c0-4 3-7 7-7V1l5 4-5 4V7c-3 0-5 1-7 4z" fill="#90d8f0" /><path d="M11 14h7l-3.500 4z" fill="#fff" /></svg></button>
      <button class="bare b2" aria-label="Lier les graphiques"><svg width="24" height="20" viewBox="0 0 24 20"><rect x="1.500" y="2" width="5" height="6" rx="2" fill="none" stroke="#fff" stroke-width="2.200" /><rect x="1.500" y="12" width="5" height="6" rx="2" fill="none" stroke="#fff" stroke-width="2.200" /><path d="M4 6v8" stroke="#aaa" stroke-width="2" /><path d="M13.500 4v11" stroke="#e04848" /><rect x="11.500" y="6.500" width="4" height="6" fill="#d83838" stroke="#f07070" /><path d="M19.500 0v14" stroke="#20c020" /><rect x="17.500" y="2.500" width="4" height="9" fill="#30c838" stroke="#60f060" /><path d="M13 15h7l-3.500 4z" fill="#fff" /></svg></button>
      <button class="bare b3" aria-label="Carnet"><svg width="14" height="17" viewBox="0 0 14 17"><path d="M.5.5h13v16H.5z" fill="#303438" stroke="#8a9098" /><path d="M3 4h5M3 7h7M6 10h5M8 13h4" stroke="#ccc" stroke-width="1.500" /><path d="M7 1h6l-3 4z" fill="#f04040" /><path d="M1 16h6l-3-4z" fill="#20d020" /></svg></button>
      <button class="bare b4" aria-label="Profondeur"><svg width="18" height="17" viewBox="0 0 18 17"><path d="M0 2h14M2 6h12M2 10h15M0 14h14" stroke="#bbb" stroke-width="4" /><path d="M1 2h7M3 6h5M3 10h5M1 14h7" stroke="#10c010" stroke-width="2.500" /><path d="M9 2h4M9 6h7M9 10h7M9 14h4" stroke="#f04040" stroke-width="2.500" /></svg></button>
      <div class="scroll">
        <button class="step" aria-label="Défiler à gauche"><svg width="5" height="8" viewBox="0 0 5 8"><path d="M5 0v8L0 4z" fill="#eee" /></svg></button>
        <div class="track"><div class="thumb"><i></i><i></i><i></i></div></div>
        <button class="step" aria-label="Défiler à droite"><svg width="5" height="8" viewBox="0 0 5 8"><path d="M0 0v8L5 4z" fill="#eee" /></svg></button>
      </div>
      <button class="bare cfg" aria-label="Style du graphique"><svg width="16" height="20" viewBox="0 0 16 20"><path d="M12 0v20M3 8v12" stroke="#eee" /><rect x="9.500" y="2.500" width="5" height="14" fill="#30c838" stroke="#eee" /><rect x="1" y="11.500" width="5" height="5.500" fill="#e04848" stroke="#eee" /><path d="M2 17l6-6q-1-5 4-6l-2 3 1 1.500 3-1q-1 4-5 4l-5 6z" fill="#111" stroke="#eee" /></svg></button>
      <button class="zoom on" aria-label="Zoom automatique" aria-pressed="true"><svg width="20" height="20" viewBox="0 0 20 20"><path d="M10 11l7 7" stroke="#eee" stroke-width="2.500" /><circle cx="7" cy="6.500" r="5" fill="#8c9096" stroke="#c5c9ce" stroke-width="1.300" /><circle cx="5.500" cy="5" r="2" fill="#e8e8e8" /><path d="M17 2v8M1 17h9" stroke="#30c8ff" stroke-width="1.500" /><path d="M14.500 4L17 .5 19.500 4zM14.500 8.500l2.500 3.500 2.500-3.500zM3.500 14.500L0 17l3.500 2.500zM7.500 14.500L11 17l-3.500 2.500z" fill="#30c8ff" /></svg></button>
      <button class="zoom" aria-label="Zoom arrière"><svg width="20" height="20" viewBox="0 0 20 20"><use href="#lens" /><path d="M4 7.500h7" stroke="#30c8ff" stroke-width="1.800" /></svg></button>
      <button class="zoom" aria-label="Zoom avant"><svg width="20" height="20" viewBox="0 0 20 20"><use href="#lens" /><path d="M4 7.500h7M7.500 4v7" stroke="#30c8ff" stroke-width="1.800" /></svg></button>
    </footer>
  </div>
</template>

<style>
html, body { background: #000; overflow: hidden; }
</style>

<style scoped>
.win {
  box-sizing: border-box;
  height: 100vh;
  padding: 0 4px;
  display: flex;
  flex-direction: column;
  background: linear-gradient(90deg, #0a0a0a 1px, #5a5a5a 1px, #5a5a5a 2px, #0a0a0a 2px);
  color: #dcdcdc;
  font: 11px/14px "Liberation Sans", Arial, sans-serif;
}
.win * { box-sizing: border-box; }
.defs { position: absolute; width: 0; height: 0; }
svg { display: block; }
button, input, select { font: inherit; color: inherit; margin: 0; padding: 0; }
.bare { border: 0; background: none; display: flex; align-items: center; justify-content: center; }

.title {
  flex: none;
  height: 25px;
  padding-bottom: 2px;
  display: flex;
  align-items: center;
  white-space: nowrap;
  border-top: 1px solid #555;
  border-bottom: 1px solid #5a5a5a;
  background: linear-gradient(#3e3e3e, #202020 55%, #000);
}
.caret { margin-left: 5px; }
.sym { margin: 0 3px; }
.quote { margin-left: 5px; color: #f04848; }
.date { margin: 0 4px; color: #f0f0f0; }
.wbtns { margin-left: auto; margin-right: 3px; display: flex; gap: 6px; }

.toolbar {
  flex: none;
  height: 32px;
  display: flex;
  align-items: center;
  border-bottom: 1px solid #5a5a5a;
  background: linear-gradient(#080808, #1e1e1e);
}
.tools { display: flex; padding-left: 7px; }
.tool { width: 26px; height: 26px; border: 0; background: none; display: flex; align-items: center; justify-content: center; }
.units, .pick { height: 22px; display: flex; align-items: center; border: 1px solid #4c4c4c; border-radius: 3px; background: #121212; }
.units { width: 77px; margin-left: 147px; padding-right: 2px; }
.units input { width: 100%; min-width: 0; border: 0; background: none; text-align: right; padding-right: 1px; outline: 0; }
.spin { flex: none; width: 15px; display: grid; gap: 1px; }
.spin button { height: 8px; border: 0; background: linear-gradient(#3a3a3a, #1a1a1a); display: flex; align-items: center; justify-content: center; }
.pick { position: relative; }
.pick select { width: 100%; height: 100%; border: 0; outline: 0; background: none; appearance: none; padding-left: 3px; }
.kind { width: 86px; }
.per { width: 89px; margin-left: 196px; }
.arrow { position: absolute; right: 2px; top: 2px; bottom: 2px; width: 16px; background: linear-gradient(#3c3c3c, #101010); pointer-events: none; }
.arrow::after { content: ""; position: absolute; left: 4px; top: 6px; border: 4px solid transparent; border-top-color: #eee; border-bottom: 0; }
.indic { margin: 0 154px 0 auto; height: 26px; display: flex; border: 1px solid #000; border-radius: 3px; background: #333; overflow: hidden; }
.indic button { width: 34px; border: 0; background: linear-gradient(#484848, #1a1a1a); display: flex; align-items: center; justify-content: center; }
.indic .more { width: 13px; border-left: 1px solid #000; }

.charts { flex: 1; min-height: 0; display: flex; flex-direction: column; background: #1e1e1e; }
.row { min-height: 0; display: flex; }
.price { flex: 486 1 0; }
.rsi { flex: 127 1 0; margin-top: 2px; }
.plot { position: relative; flex: 1; min-width: 0; border: solid #5a5a5a; border-width: 0 1px 1px; background: #000; overflow: hidden; }
.rsi .plot { border-top-width: 1px; }
.canvas { position: absolute; inset: 0; width: 100%; height: 100%; }
.ln { fill: none; }
.lbl, .tag, .num { position: absolute; transform: translateY(-50%); white-space: nowrap; }
.fib { color: #e0e0e0; }
.head {
  position: absolute;
  left: 0;
  top: 0;
  height: 18px;
  padding: 0 2px 1px 3px;
  display: flex;
  align-items: center;
  gap: 4px;
  border: solid #5a5a5a;
  border-width: 0 1px 1px 0;
  background: linear-gradient(#0c0c0c, #303030);
}
.tight span { margin-right: -2px; }
.credit { position: absolute; left: 2px; bottom: 0; margin: 0; height: 12px; line-height: 12px; }

.axis { position: relative; flex: none; width: 55px; margin-bottom: 1px; }
.rsi .axis { margin-top: 1px; }
.tick { position: absolute; left: 0; width: 4px; height: 1px; background: #777; }
.tick.short { width: 2px; }
.num { left: 6px; }
.num.big { font-size: 12px; font-weight: bold; }
.tag { left: 4px; height: 16px; width: 40px; padding-left: 1px; line-height: 14px; border: 1px solid #585858; background: linear-gradient(#3a3a3a, #101010 70%); }
.last { color: #000; background: linear-gradient(#ffe030, #e8b800); border-color: #c8a000; }
.timer { width: 14px; padding: 0; color: #222; background: #ffb0b0; border-color: #ff9090; }
.now { width: 37px; color: #f0f0f0; }

.time { flex: none; height: 21px; padding: 0 56px 0 1px; }
.days { position: relative; height: 100%; }
.days span { position: absolute; top: 0; padding-top: 5px; transform: translateX(-50%); }
.days span::before { content: ""; position: absolute; left: 50%; top: 0; width: 1px; height: 4px; background: #777; }
.days .month { font-weight: bold; }

.bottom {
  flex: none;
  height: 33px;
  display: flex;
  align-items: center;
  border-top: 1px solid #5a5a5a;
  background: linear-gradient(#1c1c1c, #060606);
}
.b1 { margin-left: 6px; }
.b2 { margin-left: 7px; }
.b3 { margin-left: 9px; }
.b4 { margin-left: 11px; }
.scroll { flex: 1; min-width: 0; display: flex; align-items: center; margin: 0 7px 0 6px; }
.step { flex: none; width: 14px; height: 16px; border: 1px solid #4c4c4c; border-radius: 3px; background: linear-gradient(#303030, #101010); display: flex; align-items: center; justify-content: center; }
.track { flex: 1; height: 16px; display: flex; justify-content: flex-end; border: solid #4a4a4a; border-width: 1px 0; background: linear-gradient(#0c0c0c, #202020); }
.thumb { width: 28px; margin: -1px 1px -1px 0; border: 1px solid #4c4c4c; border-radius: 4px; background: linear-gradient(#0c0c0c, #202020); display: flex; flex-direction: column; gap: 1px; align-items: center; justify-content: center; }
.thumb i { width: 6px; height: 1px; background: #555; }
.cfg { margin-right: 7px; }
.zoom { width: 26px; height: 26px; border: 0; background: none; display: flex; align-items: center; justify-content: center; margin-right: 2px; }
.zoom:last-child { margin-right: 1px; }
.zoom.on { background: #686868; }
</style>
